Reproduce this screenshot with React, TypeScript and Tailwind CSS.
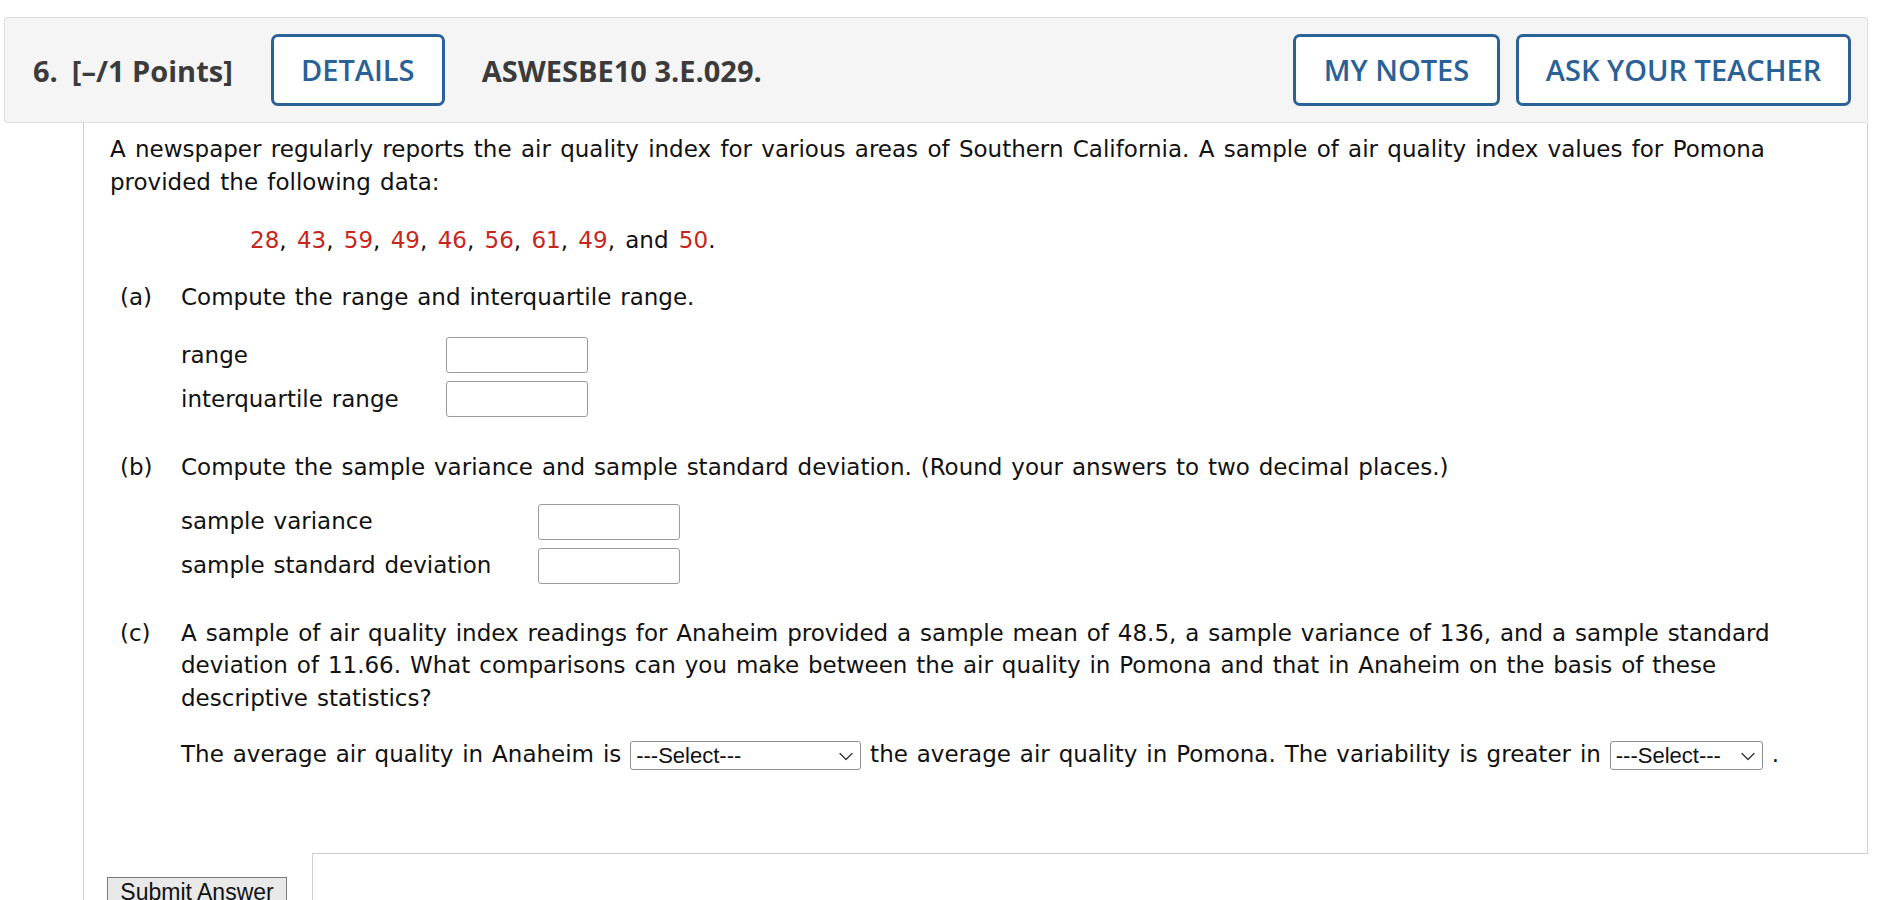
import React from "react";

function Chevron() {
  return (
    <svg width="14" height="9" viewBox="0 0 14 9" fill="none" className="block">
      <path d="M1 1.5 L7 7.5 L13 1.5" stroke="#333" strokeWidth="1.3" strokeLinecap="round" strokeLinejoin="round" />
    </svg>
  );
}

function Select({ width }: { width: string }) {
  return (
    <span className={`relative inline-flex items-center align-middle h-[29px] ${width} border border-[#8f8f8f] rounded-[3px] bg-white font-['Liberation_Sans'] text-[22px] text-black [word-spacing:0px]`}>
      <select className="appearance-none w-full h-full bg-transparent pl-[5px] pr-[24px] outline-none font-['Liberation_Sans'] text-[22px] text-[#111] leading-[27px]">
        <option>---Select---</option>
      </select>
      <span className="absolute right-[7px] top-[10px] pointer-events-none">
        <Chevron />
      </span>
    </span>
  );
}

function Input({ className = "" }: { className?: string }) {
  return (
    <input
      type="text"
      className={`w-[142px] h-[36px] border border-[#9a9a9a] rounded-[3px] bg-white ${className}`}
    />
  );
}

const Red = ({ children }: { children: React.ReactNode }) => (
  <span className="text-[#c8261c]">{children}</span>
);

export default function App() {
  const btn =
    "h-[72px] border-[3px] border-[#2a6196] rounded-[7px] text-[#2a6196] font-semibold text-[29px] bg-white flex items-center justify-center";
  return (
    <div className="h-[900px] overflow-hidden bg-white pt-[17px] pl-[4px] pr-[22px]">
      <header className="flex items-center h-[106px] bg-[#f5f5f5] border border-[#dedede] rounded-[3px] pl-[28px] pr-[16px] font-['Open_Sans'] text-[#3b3b3b]">
        <span className="font-bold text-[29px] leading-none">6.</span>
        <span className="font-bold text-[29px] leading-none ml-[14px]">[–/1 Points]</span>
        <div className={`${btn} ml-[38px] w-[174px]`}>DETAILS</div>
        <span className="ml-[37px] font-bold text-[29px] leading-none">ASWESBE10 3.E.029.</span>
        <div className="ml-auto flex gap-[16px]">
          <div className={`${btn} w-[207px]`}>MY NOTES</div>
          <div className={`${btn} w-[335px]`}>ASK YOUR TEACHER</div>
        </div>
      </header>

      <div className="ml-[79px] border-l border-[#cfcfcf] font-['DejaVu_Sans'] text-[23px] leading-[32.5px] text-[#111] [word-spacing:1.6px]">
        <div className="h-[730px] border-r border-[#cfcfcf] pl-[26px] pr-[24px] pt-[10px]">
          <p className="[word-spacing:2px]">
            A newspaper regularly reports the air quality index for various areas of Southern California. A sample of air
            quality index values for Pomona provided the following data:
          </p>
          <p className="mt-[26px] pl-[140px] [word-spacing:3px]">
            <Red>28</Red>, <Red>43</Red>, <Red>59</Red>, <Red>49</Red>, <Red>46</Red>, <Red>56</Red>, <Red>61</Red>,{" "}
            <Red>49</Red>, and <Red>50</Red>.
          </p>

          <div className="mt-[24px] flex">
            <span className="w-[71px] pl-[10px] shrink-0">(a)</span>
            <div className="flex-1">
              <p>Compute the range and interquartile range.</p>
              <div className="mt-[24px] grid grid-cols-[auto_auto] justify-start gap-x-[47px] gap-y-[8px] items-center">
                <span>range</span>
                <Input />
                <span>interquartile range</span>
                <Input />
              </div>
            </div>
          </div>

          <div className="mt-[34px] flex">
            <span className="w-[71px] pl-[10px] shrink-0">(b)</span>
            <div className="flex-1">
              <p>
                Compute the sample variance and sample standard deviation. (Round your answers to two decimal places.)
              </p>
              <div className="mt-[20px] grid grid-cols-[auto_auto] justify-start gap-x-[47px] gap-y-[8px] items-center">
                <span>sample variance</span>
                <Input />
                <span>sample standard deviation</span>
                <Input />
              </div>
            </div>
          </div>

          <div className="mt-[33px] flex">
            <span className="w-[71px] pl-[10px] shrink-0">(c)</span>
            <div className="flex-1">
              <p>
                A sample of air quality index readings for Anaheim provided a sample mean of 48.5, a sample variance of 136,
                and a sample standard deviation of 11.66. What comparisons can you make between the air quality in Pomona
                and that in Anaheim on the basis of these descriptive statistics?
              </p>
              <p className="mt-[24px]">
                The average air quality in Anaheim is <Select width="w-[231px]" /> the average air quality in Pomona. The
                variability is greater in <Select width="w-[153px]" /> .
              </p>
            </div>
          </div>
        </div>

        <div className="flex h-[60px]">
          <div className="w-[228px] shrink-0 pl-[23px] pt-[23px]">
            <button className="h-[36px] w-[180px] bg-[#e9e9e9] border border-[#7a7a7a] font-['Liberation_Sans'] text-[23px] text-[#111] leading-none pb-[4px] [word-spacing:0px]">
              Submit Answer
            </button>
          </div>
          <div className="flex-1 border-t border-l border-[#cfcfcf]" />
        </div>
      </div>
    </div>
  );
}
